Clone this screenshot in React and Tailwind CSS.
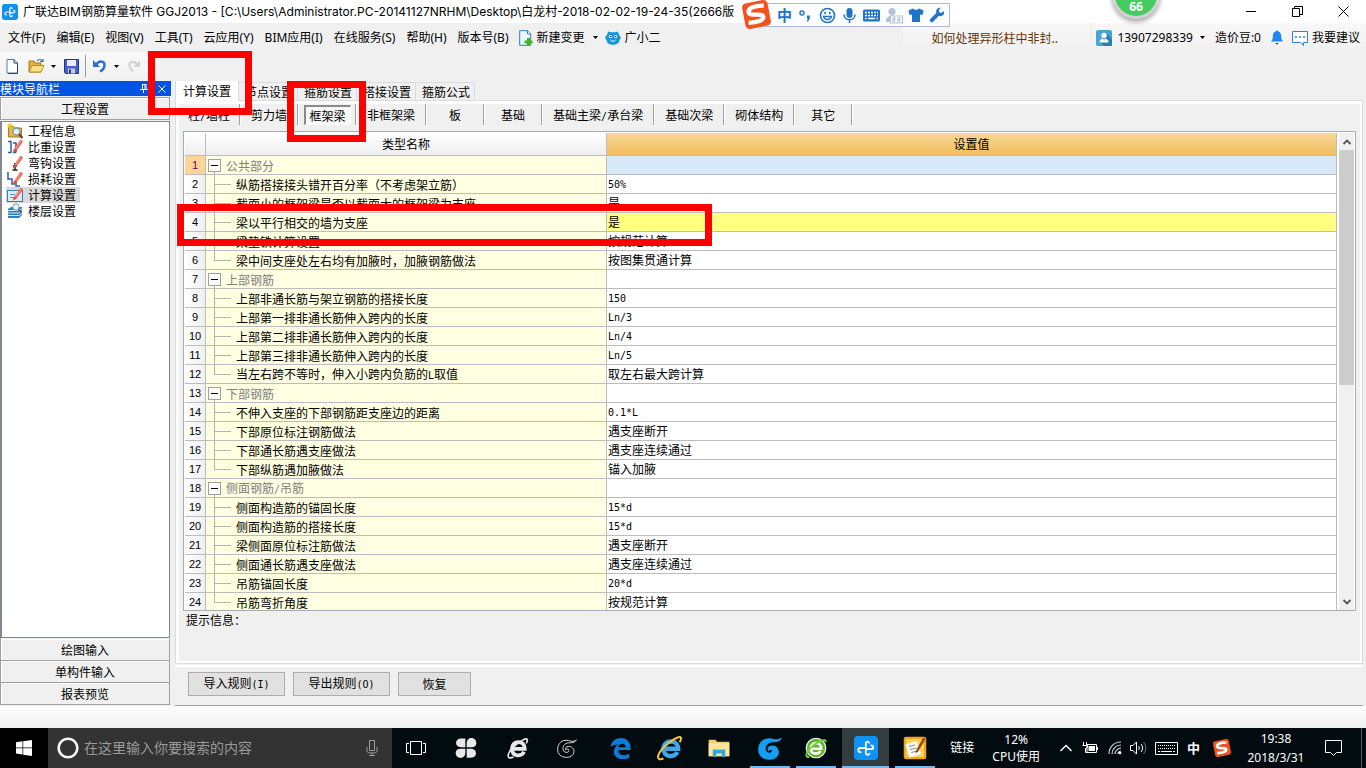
import React from "react";

const UI = "font-['Noto_Sans','Noto_Sans_CJK_SC',sans-serif]";
const SONG = "font-['Noto_Sans_CJK_SC',sans-serif]";

/* CJK text with half-width characters set in a fixed-pitch face */
function Mix({ children }) {
  return (
    <span className="whitespace-pre">
      {children.split(/([\x20-\x7e]+)/).map((part, i) =>
        i % 2 ? (
          <span key={i} className="font-['DejaVu_Sans_Mono',monospace] text-[10px]">{part}</span>
        ) : (
          part
        )
      )}
    </span>
  );
}

function Caret() {
  return (
    <svg width="5" height="3" viewBox="0 0 5 3" className="shrink-0">
      <path d="M0 0h5L2.5 3z" fill="#000" />
    </svg>
  );
}

function AppLogo({ size }) {
  return (
    <svg width={size} height={size} viewBox="0 0 24 24" className="shrink-0">
      <rect width="24" height="24" rx="4" fill="#0c93f5" />
      <path d="M15 6.800C14.500 5 11.800 5.200 11.800 7.500V17c0 2.300 2.900 2.300 3.700.6M11.800 13.200H17c3 0 3-3.700.3-3.700M11.800 12H7c-3.500 0-3.500 4.300-.3 4.200" fill="none" stroke="#fff" strokeWidth="1.800" strokeLinecap="round" />
    </svg>
  );
}

function Sogou({ size }) {
  return (
    <svg width={size} height={size} viewBox="0 0 28 28" className="shrink-0">
      <g transform="rotate(-11 14 14)">
        <rect x="1.500" y="1.500" width="25" height="25" rx="4" fill="#f4511e" />
        <path d="M22.500 7C14 5 7 6.500 7 10.500c0 4.500 13 2.500 13 6.800C20 21 13 21.500 5 20.500" fill="none" stroke="#fff" strokeWidth="4.200" />
      </g>
    </svg>
  );
}

function TitleBar() {
  return (
    <header className="flex h-[23px] shrink-0 items-center bg-white pl-[2px] text-[12px] leading-[18px] text-black">
      <AppLogo size={16} />
      <h1 className="ml-[5px] flex-1 overflow-hidden font-['Inter','Noto_Sans_CJK_SC',sans-serif] whitespace-nowrap">
        广联达BIM钢筋算量软件 GGJ2013 - [C:\Users\Administrator.PC-20141127NRHM\Desktop\白龙村-2018-02-02-19-24-35(2666版
      </h1>
      <div className="flex items-center">
        <button aria-label="最小化" className="flex h-[20px] w-[46px] items-center justify-center">
          <svg width="11" height="11" viewBox="0 0 11 11"><path d="M0 5.500h10" stroke="#000" /></svg>
        </button>
        <button aria-label="还原" className="flex h-[20px] w-[46px] items-center justify-center">
          <svg width="11" height="11" viewBox="0 0 11 11"><path d="M.5 2.500h7v8h-7zM2.500 2.500v-2h8v8h-3" fill="none" stroke="#000" /></svg>
        </button>
        <button aria-label="关闭" className="flex h-[20px] w-[46px] items-center justify-center">
          <svg width="11" height="11" viewBox="0 0 11 11"><path d="M.5.5l10 10M10.500.5l-10 10" stroke="#000" /></svg>
        </button>
      </div>
    </header>
  );
}

function ImeBar() {
  return (
    <div className="absolute top-0 left-[742px] flex items-start text-[#1f74c9]">
      <div className="relative z-10"><Sogou size={29} /></div>
      <div className="-ml-[10px] mt-[3px] flex h-[24px] w-[189px] items-center gap-[5px] border border-[#a9bcd4] bg-[#fcfdff] pl-[15px]">
        <button className={`${SONG} text-[15px] leading-[20px] font-bold`}>中</button>
        <svg width="17" height="17" viewBox="0 0 17 17"><circle cx="5" cy="6" r="2" fill="none" stroke="currentColor" strokeWidth="1.400" /><path d="M10 8.500h2.800v3L11 14.500H9.800l1-3H10z" fill="currentColor" /></svg>
        <svg width="17" height="17" viewBox="0 0 17 17" fill="none" stroke="currentColor" strokeWidth="1.600"><circle cx="8.500" cy="8.500" r="7" /><path d="M4.500 9.500c1 4 7 4 8 0z" strokeWidth="1.300" /><path d="M6.200 4.800v2.400M10.800 4.800v2.400" /></svg>
        <svg width="17" height="17" viewBox="0 0 17 17"><rect x="5.500" y="1" width="6" height="10" rx="3" fill="currentColor" /><path d="M3 7.500c0 7 11 7 11 0M8.500 13v3" fill="none" stroke="currentColor" strokeWidth="1.500" /></svg>
        <svg width="17" height="17" viewBox="0 0 17 17"><rect x="0" y="2.500" width="17" height="12" rx="1.500" fill="currentColor" /><path d="M2 5.500h13M2 8.500h13" stroke="#fff" strokeWidth="1.500" strokeDasharray="2 1" /><path d="M2 11.500h1.500M5 11.500h7M13.500 11.500H15" stroke="#fff" strokeWidth="1.500" /></svg>
        <svg width="18" height="17" viewBox="0 0 18 17"><circle cx="7" cy="4.500" r="3.500" fill="#b4c3d6" /><path d="M1 14c0-7 12-7 12-1v2H1z" fill="#b4c3d6" /><rect x="5.500" y="9" width="12" height="7" fill="#fff" stroke="#b4c3d6" /><path d="M7.500 10.800h2.500v1.700H7.800v1.700h2.500M12.500 10.800H15v1.700h-2.200v1.700h2.500" fill="none" stroke="#a8b9ce" /></svg>
        <svg width="16" height="16" viewBox="0 0 16 16"><path d="M5 1.500c1 1.800 5 1.800 6 0l4.500 2-1 4.500-2.500-.5V15H4V7.500L1.500 8 .5 3.500z" fill="currentColor" /></svg>
        <svg width="16" height="16" viewBox="0 0 16 16"><path d="M14.800 4.200l-2.900 1.900-1.900-1.200L10.300 2l2-1.200C9.500.2 6.500 2 7.300 6L1 12.200C0 14 2 16 3.800 14.900L9.600 9c4 .8 6.400-1.800 5.200-4.800z" fill="currentColor" /></svg>
      </div>
    </div>
  );
}

function ScoreBall() {
  return (
    <div className="absolute -top-[29px] right-[206px] flex size-[48px] items-end justify-center rounded-full border-[3px] border-[#d2d2d2] bg-[#45cc60] pb-[3px] font-['Open_Sans',sans-serif] text-[12px] leading-[12px] font-bold text-white shadow-[0_3px_5px_rgba(0,0,0,0.35)]">
      66
    </div>
  );
}

const MENUS = ["文件(F)", "编辑(E)", "视图(V)", "工具(T)", "云应用(Y)", "BIM应用(I)", "在线服务(S)", "帮助(H)", "版本号(B)"];

function MenuBar() {
  return (
    <nav className="flex h-[29px] shrink-0 items-center bg-[#f0f0f0] pl-[8px] text-[12px] leading-[18px] whitespace-nowrap text-black">
      <div className="flex gap-[11px]">
        {MENUS.map((m) => (
          <button key={m}>{m}</button>
        ))}
      </div>
      <button className="ml-[10px] flex items-center gap-[4px]">
        <svg width="14" height="16" viewBox="0 0 14 16">
          <path d="M.7.7h8l3 3v11.600H.7z" fill="#eaf5ff" stroke="#2f80b9" />
          <path d="M8.500.7v3.300h3.300" fill="#fff" stroke="#2f80b9" />
          <path d="M8 8h3v2.500h2.500v3H11V16H8v-2.500H5.500v-3H8z" fill="#45b31e" />
        </svg>
        新建变更
      </button>
      <span className="ml-[8px]"><Caret /></span>
      <button className="ml-[7px] flex items-center gap-[4px]">
        <svg width="16" height="16" viewBox="0 0 16 16">
          <path d="M3 1.500l3 .8h4l3-.8.800 3 2.200 3-1.800 3.500c-.6 5-11.800 5-12.400 0L0 7.500l2.200-3z" fill="#1597e0" />
          <circle cx="5.500" cy="6.500" r="1.600" fill="#fff" /><circle cx="10.500" cy="6.500" r="1.600" fill="#fff" />
          <circle cx="5.700" cy="6.500" r=".8" fill="#063b66" /><circle cx="10.300" cy="6.500" r=".8" fill="#063b66" />
          <path d="M5.500 10c1 1.600 4 1.600 5 0" fill="none" stroke="#fff" />
        </svg>
        广小二
      </button>
      <div className="ml-auto flex h-full items-center">
        <a href="#tip" className={`${SONG} flex h-full w-[187px] items-center bg-linear-to-b from-[#f8f8f8] to-[#f0f0f0] pl-[28px] text-[#663300]`}>
          如何处理异形柱中非封..
        </a>
        <div className="ml-[2px] flex h-full items-center bg-linear-to-b from-[#f8f8f8] to-[#f0f0f0] pr-[6px] pl-[4px]">
          <svg width="16" height="16" viewBox="0 0 16 16">
            <rect width="16" height="16" rx="2" fill="#4ba3d3" />
            <path d="M10 3l6 6v7H8l-4-4z" fill="#2f7fa8" />
            <circle cx="8" cy="5.500" r="2.700" fill="#fff" /><path d="M3.500 12.500c0-3 2-4 4.500-4s4.500 1 4.500 4z" fill="#fff" /><path d="M7 8.500h2L8 11z" fill="#4ba3d3" />
          </svg>
          <button className="ml-[5px] flex items-center gap-[7px]">13907298339 <Caret /></button>
          <span className="ml-[10px]">造价豆:0</span>
          <svg width="12" height="15" viewBox="0 0 12 15" className="ml-[10px]">
            <path d="M6 0l1 1.300c2.500.7 3.200 3 3.200 5.200 0 2.500.6 3.800 1.800 5H0c1.200-1.200 1.800-2.500 1.800-5C1.800 4.300 2.500 2 5 1.300z" fill="#1e86f0" /><path d="M4.500 13h3L6 14.800z" fill="#0b3b78" />
          </svg>
          <svg width="16" height="16" viewBox="0 0 16 16" className="ml-[9px]">
            <path d="M.5 1.500h15v11h-4v3l-3-3h-8z" fill="#fff" stroke="#2a7fe0" /><path d="M3 7h2M7 7h2M11 7h2" stroke="#2a7fe0" strokeWidth="1.500" />
          </svg>
          <button className="ml-[4px]">我要建议</button>
        </div>
      </div>
    </nav>
  );
}

function ToolBar() {
  return (
    <div className="flex h-[29px] shrink-0 bg-[#f0f0f0]">
      <div className="flex h-[26px] w-[160px] items-center rounded-r bg-linear-to-b from-[#fafafa] to-[#f1f1f1] pt-[2px] pl-[6px]">
        <button aria-label="新建">
          <svg width="13" height="15" viewBox="0 0 13 15" className="block"><path d="M1 .5h7l3.500 3.500v10H1z" fill="#fff" stroke="#5b7a96" /><path d="M8 .5V4h3.500v10.500H2" fill="none" stroke="#26435f" /></svg>
        </button>
        <button aria-label="打开" className="ml-[9px]">
          <svg width="17" height="16" viewBox="0 0 17 16" className="block"><path d="M1 3h5l1 2h6v9H1z" fill="#e6b23c" stroke="#a67c1c" /><path d="M1 14L4 7.500h12L13 14z" fill="#ffdf84" stroke="#b78b26" /><path d="M9 3c2-2 4-2 5.500 0M12 3.500h3V1" fill="none" stroke="#3d6c9a" strokeWidth="1.200" /></svg>
        </button>
        <span className="ml-[6px]"><Caret /></span>
        <button aria-label="保存" className="ml-[8px]">
          <svg width="15" height="15" viewBox="0 0 15 15" className="block"><path d="M.5.5h14v14h-13l-1-1z" fill="#4b5fd0" stroke="#26328c" /><rect x="3" y="1" width="9" height="6" fill="#e8eefc" /><rect x="4" y="9.500" width="7" height="5" fill="#c6cbe0" /><rect x="5" y="10.500" width="2" height="4" fill="#26328c" /></svg>
        </button>
        <span className="mx-[6px] h-[22px] w-px bg-[#9a9a9a]" />
        <button aria-label="撤销" className="ml-[1px]">
          <svg width="14" height="14" viewBox="0 0 14 14" className="block"><path d="M3.500 5.500C6 1 12 2 11.500 6.500c-.3 3-2.500 5-4.500 6" fill="none" stroke="#2d6fd0" strokeWidth="2.400" /><path d="M0 1v7h7z" fill="#2d6fd0" /></svg>
        </button>
        <span className="ml-[7px]"><Caret /></span>
        <button aria-label="重做" className="ml-[8px]">
          <svg width="13" height="14" viewBox="0 0 14 14" className="block"><path d="M10.500 5.500C8 1 2 2 2.500 6.500c.3 3 2.500 5 4.500 6" fill="none" stroke="#d2d2d2" strokeWidth="2.200" /><path d="M14 1v7H7z" fill="#d2d2d2" /></svg>
        </button>
      </div>
    </div>
  );
}

const PEN = (
  <g>
    <path d="M6.500 11L13.500.800l2.500 1.700-7 9.500-3 1.500z" fill="#e8442c" />
    <path d="M8 9.500L14 1.200l1 .7-6 8.600z" fill="#ff9a80" />
  </g>
);

const NAV = [
  ["工程信息", <g key="a"><path d="M1.500 3.500h5l1 1.500h7v9h-13z" fill="#e7b548" stroke="#a5792a" /><path d="M3 0v6M0 3h6M1 1l4 4M5 1L1 5" stroke="#f2c500" /><circle cx="9.500" cy="8.500" r="3.500" fill="#e3f1fb" stroke="#7a97ad" strokeWidth="1.300" /><path d="M12 11l3.500 4" stroke="#5a4632" strokeWidth="2" /></g>],
  ["比重设置", <g key="b"><path d="M1 2.500h3v11H1M6 4h3v9.500M6 13.500h3" fill="none" stroke="#2d5da8" strokeWidth="1.500" />{PEN}</g>],
  ["弯钩设置", <g key="c"><path d="M8 8v7M5.500 15h5M6 11h4" fill="none" stroke="#222" strokeWidth="1.500" />{PEN}</g>],
  ["损耗设置", <g key="d"><path d="M1 1v7h4v5h3M9 10v5h4" fill="none" stroke="#2d5da8" strokeWidth="1.500" />{PEN}</g>],
  ["计算设置", <g key="e"><rect x=".5" y="3.500" width="15" height="11" fill="#dcebfb" stroke="#3c78c0" /><path d="M3 7.500h5M3 10.500h7" stroke="#5a96d8" />{PEN}</g>],
  ["楼层设置", <g key="f"><path d="M1 6l3-2h11v8l-3 3H1z" fill="#2c7fc0" /><path d="M1 7.500h11l3-2M1 10h11l3-2M1 12.500h11l3-2" fill="none" stroke="#d6ecfa" /><circle cx="9" cy="4" r="3.200" fill="#e6f3fb" stroke="#8299ab" /><path d="M11.500 6.500l3 3" stroke="#5a5a5a" strokeWidth="1.600" /></g>],
];

const NAV_BUTTON = "h-[22px] w-full shrink-0 border-r border-b border-[#a0a0a0] bg-[#f0f0f0] text-center text-[12px] leading-[20px] text-black shadow-[inset_1px_1px_0_#fff]";

function Sidebar() {
  return (
    <aside className={`${SONG} flex w-[171px] shrink-0 flex-col bg-[#f0f0f0] pb-px text-[12px]`}>
      <div className="flex h-[15px] shrink-0 items-center bg-[#0054e3] leading-[14px] text-white">
        <h2>模块导航栏</h2>
        <button aria-label="固定" className="ml-auto">
          <svg width="8" height="9" viewBox="0 0 8 9" className="block"><path d="M2 .5h4M2.500 0v5M5 0v5M6 0v5M0 5.500h8M3.500 5.500V9" fill="none" stroke="#fff" /></svg>
        </button>
        <button aria-label="关闭导航栏" className="mr-[5px] ml-[10px]">
          <svg width="8" height="8" viewBox="0 0 8 8" className="block"><path d="M.5.5l7 7M7.500.5l-7 7" stroke="#fff" /></svg>
        </button>
      </div>
      <div className="flex min-h-0 flex-1 flex-col pt-px pr-px">
        <button className="h-[23px] shrink-0 border border-[#a0a0a0] bg-[#f0f0f0] text-center leading-[22px] text-black shadow-[inset_1px_1px_0_#fff]">工程设置</button>
        <ul className="mt-[1px] flex-1 border border-l-2 border-[#828790] bg-white pt-[1px] pl-[4px]">
          {NAV.map(([label, icon]) => (
            <li key={label} className="h-[16px]">
              <button className={`flex h-[16px] items-center gap-[5px] pr-[4px] pl-px leading-[16px] text-black ${label === "计算设置" ? "bg-[#d9d9d9]" : ""}`}>
                <svg width="16" height="16" viewBox="0 0 16 16">{icon}</svg>
                {label}
              </button>
            </li>
          ))}
        </ul>
        <div className="flex flex-col border-l border-[#a0a0a0] pt-px">
          <button className={NAV_BUTTON}>绘图输入</button>
          <button className={NAV_BUTTON}>单构件输入</button>
          <button className={NAV_BUTTON}>报表预览</button>
        </div>
      </div>
    </aside>
  );
}

const ROWS = [
  ["公共部分", null, "group"],
  ["纵筋搭接接头错开百分率（不考虑架立筋）", "50%"],
  ["截面小的框架梁是否以截面大的框架梁为支座", "是"],
  ["梁以平行相交的墙为支座", "是"],
  ["梁垫铁计算设置", "按规范计算"],
  ["梁中间支座处左右均有加腋时，加腋钢筋做法", "按图集贯通计算", "last"],
  ["上部钢筋", null, "group"],
  ["上部非通长筋与架立钢筋的搭接长度", "150"],
  ["上部第一排非通长筋伸入跨内的长度", "Ln/3"],
  ["上部第二排非通长筋伸入跨内的长度", "Ln/4"],
  ["上部第三排非通长筋伸入跨内的长度", "Ln/5"],
  ["当左右跨不等时，伸入小跨内负筋的L取值", "取左右最大跨计算", "last"],
  ["下部钢筋", null, "group"],
  ["不伸入支座的下部钢筋距支座边的距离", "0.1*L"],
  ["下部原位标注钢筋做法", "遇支座断开"],
  ["下部通长筋遇支座做法", "遇支座连续通过"],
  ["下部纵筋遇加腋做法", "锚入加腋", "last"],
  ["侧面钢筋/吊筋", null, "group"],
  ["侧面构造筋的锚固长度", "15*d"],
  ["侧面构造筋的搭接长度", "15*d"],
  ["梁侧面原位标注筋做法", "遇支座断开"],
  ["侧面通长筋遇支座做法", "遇支座连续通过"],
  ["吊筋锚固长度", "20*d"],
  ["吊筋弯折角度", "按规范计算", "last"],
];

function NameCell({ label, kind }) {
  if (kind === "group") {
    return (
      <div className="flex h-[18px] items-center leading-[14px] text-[#808080]">
        <div className="ml-[2px] flex h-full w-[13px] flex-col items-center pt-[3px]">
          <button aria-label={`折叠 ${label}`} className="flex h-[13px] w-[13px] shrink-0 items-center justify-center border border-[#a0a0a0] bg-white">
            <span className="h-px w-[7px] bg-black" />
          </button>
          <span className="w-px flex-1 bg-[#b4b4b4]" />
        </div>
        <span className="ml-[5px] pt-[2px]"><Mix>{label}</Mix></span>
      </div>
    );
  }
  return (
    <div className="flex h-[18px] items-center leading-[14px]">
      <div className="ml-[8px] flex h-[19px] w-[17px] flex-col self-start">
        <span className="h-[10px] border-b border-l border-[#b4b4b4]" />
        <span className={kind === "last" ? "h-[9px]" : "h-[9px] border-l border-[#b4b4b4]"} />
      </div>
      <span className="ml-[5px] pt-[2px]"><Mix>{label}</Mix></span>
    </div>
  );
}

function SettingsTable() {
  return (
    <div className="mx-[4px] mt-[5px] flex min-h-0 flex-1 overflow-hidden border border-[#a5acb2] bg-white pt-px pl-px">
      <div className="min-w-0 flex-1 overflow-hidden">
        <table className={`${SONG} w-full table-fixed border-separate border-spacing-0 text-[12px] leading-[16px] text-black`}>
          <colgroup>
            <col className="w-[21px]" />
            <col className="w-[401px]" />
            <col />
          </colgroup>
          <thead>
            <tr className="h-[23px]">
              <th aria-label="序号" className="border-r border-b border-[#bdbdbd] bg-linear-to-b from-white to-[#eeeeee] p-0" />
              <th className="border-r border-b border-[#bdbdbd] bg-linear-to-b from-white to-[#eeeeee] p-0 font-normal">类型名称</th>
              <th className="border-r border-b border-[#bdbdbd] bg-linear-to-b from-[#f8d797] to-[#f0be5c] p-0 font-normal">设置值</th>
            </tr>
          </thead>
          <tbody>
            {ROWS.map(([label, value, kind], i) => (
              <tr key={i} className="h-[19px]">
                <th scope="row" className={`border-r border-b border-[#bdbdbd] p-0 text-center font-['Liberation_Sans',sans-serif] text-[11px] font-normal ${i === 0 ? "bg-[#ffd595] text-[#5a0a5a]" : "bg-linear-to-r from-white to-[#f0f0f0]"}`}>
                  {i + 1}
                </th>
                <td className="border-r border-b border-[#bdbdbd] bg-[#ffffe1] p-0"><NameCell label={label} kind={kind} /></td>
                <td className={`border-r border-b border-[#bdbdbd] p-0 pl-px leading-[14px] ${i === 0 ? "bg-[#d8eaf9]" : i === 3 ? "bg-[#ffff80]" : "bg-white"}`}>
                  <div className="flex h-[18px] items-center">{value && <Mix>{value}</Mix>}</div>
                </td>
              </tr>
            ))}
          </tbody>
        </table>
      </div>
      <div className="mr-px ml-[2px] flex w-[15px] shrink-0 flex-col bg-[#f0f0f0]">
        <button aria-label="向上滚动" className="flex h-[17px] shrink-0 items-center justify-center">
          <svg width="8" height="6" viewBox="0 0 8 6"><path d="M.5 5L4 1.500 7.500 5" fill="none" stroke="#505050" strokeWidth="1.800" /></svg>
        </button>
        <div className="min-h-0 flex-1"><div className="h-[53%] bg-[#cdcdcd]" /></div>
        <button aria-label="向下滚动" className="flex h-[17px] shrink-0 items-center justify-center">
          <svg width="8" height="6" viewBox="0 0 8 6"><path d="M.5 1L4 4.500 7.500 1" fill="none" stroke="#505050" strokeWidth="1.800" /></svg>
        </button>
      </div>
    </div>
  );
}

const TABS = ["节点设置", "箍筋设置", "搭接设置", "箍筋公式"];
const KINDS = ["柱/墙柱", "剪力墙", "框架梁", "非框架梁", "板", "基础", "基础主梁/承台梁", "基础次梁", "砌体结构", "其它"];
const ACTION = "h-[24px] border border-[#adadad] bg-[#e1e1e1] text-[12px] leading-[20px] text-black";

function MainPanel() {
  return (
    <main className={`${SONG} mr-[3px] ml-[4px] flex min-w-0 flex-1 flex-col text-[12px] text-black`}>
      <div className="flex h-[19px] shrink-0 items-end">
        <button className="relative z-10 -mb-px h-[20px] w-[64px] border-x border-[#dcdcdc] bg-white pb-[2px] leading-[17px]">计算设置</button>
        {TABS.map((t) => (
          <button key={t} className="h-[18px] w-[59px] border-t border-r border-[#dcdcdc] pl-[2px] leading-[17px]">{t}</button>
        ))}
      </div>
      <section className="flex min-h-0 flex-1 flex-col border border-[#dcdcdc] bg-white p-[3px] pr-[2px] pb-[2px]">
        <div className="flex min-h-0 flex-1 flex-col bg-[#f0f0f0]">
          <div className="flex h-[22px] shrink-0 items-start">
            {KINDS.map((k) => (
              <div key={k} className="flex h-[21px] min-w-[58px] items-center justify-center border-r border-[#a0a0a0] pr-[4px] pl-[5px] shadow-[1px_0_0_#fff] first:px-[3px]">
                <button className={k === "框架梁" ? "h-[20px] border border-t-2 border-l-2 border-[#fff] border-t-[#8a8a8a] border-l-[#8a8a8a] bg-[#f8f8f8] px-[4px] leading-[17px]" : "h-[20px] px-[6px] leading-[20px]"}>
                  <Mix>{k}</Mix>
                </button>
              </div>
            ))}
          </div>
          <SettingsTable />
          <p className="h-[50px] shrink-0 pl-[7px] leading-[18px]">提示信息：</p>
        </div>
      </section>
      <div className="mt-px flex h-[41px] shrink-0 gap-[8px] border-t-2 border-b border-t-white border-b-[#a0a0a0] pt-[5px] pl-[13px]">
        <button className={`${ACTION} w-[97px]`}><Mix>导入规则(I)</Mix></button>
        <button className={`${ACTION} w-[97px]`}><Mix>导出规则(O)</Mix></button>
        <button className={`${ACTION} w-[73px]`}>恢复</button>
      </div>
    </main>
  );
}

const SWIRL = "M31 3C26 7 22 5 18 4 8 2 1 9 1 18c0 8 6 13 14 13s13-5 12-11c-1-5-6-8-11-6-2 1-3 3-2 5 1-2 5-2 5 1s-4 4-7 2c-4-3-3-10 2-13C20 6 27 10 31 3z";

const APPS = [
  { name: "风扇", w: "w-[52px]", size: 22, art: <g fill="#e8e8e8"><path d="M15 2v13H9C-1 15-1 2 9 2z" /><path d="M17 15V9c0-10 14-10 14 0 0 4-3 6-7 6z" /><path d="M17 17h6c10 0 10 13 0 13h-6z" /><path d="M15 17v6c0 10-14 10-14 0 0-4 3-6 7-6z" /></g> },
  { name: "浏览器", w: "w-[52px]", size: 24, art: <g fill="none" stroke="#e8e8e8"><path d="M7 17h18c0-12-17-12-17 0 0 11 13 11 16 4" strokeWidth="5" /><path d="M10 28c-11 5-9-7 4-17S31 2 27 10" strokeWidth="2.200" /></g> },
  { name: "广联达", w: "w-[46px]", size: 20, art: <path d={SWIRL} fill="none" stroke="#d5d5d5" strokeWidth="1.600" /> },
  { name: "Edge", w: "w-[62px]", size: 22, art: <path d="M1 14C3-2 29-4 30 16v3H12c0 9 11 9 16 5v6C17 36 4 31 6 19c1-4 3-7 7-8-6 0-9 1-12 3zm11 1h11c0-7-10-7-11 0z" fill="#0b7bdc" /> },
  { name: "Internet Explorer", w: "w-[36px]", size: 26, art: <g fill="none"><path d="M8 17h18c0-12-18-12-18 0 0 11 14 11 17 4" stroke="#3fa6ea" strokeWidth="5.500" /><path d="M8 29c-11 4-8-8 5-18S33-1 28 9" stroke="#f3c730" strokeWidth="2.500" /></g> },
  { name: "文件资源管理器", w: "w-[62px]", size: 22, art: <g><path d="M1 4h10l2 3h18v21H1z" fill="#f4cf68" /><path d="M1 9h30v19H1z" fill="#ffe69a" /><path d="M7 18h18v11h-5v-5h-8v5H7z" fill="#33a7dc" /></g> },
];

const RUNNING = [
  { name: "广联达云", size: 24, cls: "w-[40px] border-[#76b9ed]", art: <path d={SWIRL} fill="#149ff2" stroke="#149ff2" strokeWidth="1.500" /> },
  { name: "360浏览器", size: 24, cls: "w-[40px] border-[#76b9ed]", art: <g fill="none"><circle cx="16" cy="16" r="13" fill="#5cb52c" stroke="#fff" strokeWidth="1.500" /><path d="M9 17h14c0-10-14-10-14 0 0 8 10 8 13 3" stroke="#fff" strokeWidth="3.500" /><path d="M7 28c-8 1-2-10 6-16S32 3 28 8" stroke="#79d33c" strokeWidth="2.500" /></g> },
  { name: "广联达BIM钢筋算量软件", size: 24, cls: "w-[47px] border-[#76b9ed] bg-[#333d40]", art: null },
  { name: "便签", size: 24, cls: "w-[40px] border-[#76b9ed]", art: <g><rect x="1" y="1" width="30" height="30" rx="3" fill="#f5a21c" /><path d="M4 4h24v24H4z" fill="#fbd25a" /><path d="M3 11l15-4 6 17-15 5z" fill="#fff" /><path d="M8 14l8-2M9 18l9-2M11 22l8-2" stroke="#888" strokeWidth="1.500" /><path d="M17 20l10-18 3 2-10 17-3 2z" fill="#a14510" /></g> },
];

function TaskBar() {
  return (
    <footer className="flex h-[40px] shrink-0 items-center bg-[#020c10] text-[12px] text-white">
      <button aria-label="开始" className="flex h-full w-[48px] shrink-0 items-center justify-center bg-black">
        <svg width="16" height="16" viewBox="0 0 16 16"><path d="M0 2.300l6.500-1v6.200H0zM7.200 1.200L16 0v7.500H7.200zM0 8.300h6.500v6.300l-6.500-1zM7.200 8.300H16V16l-8.800-1.300z" fill="#fff" /></svg>
      </button>
      <label className="flex h-full w-[344px] shrink-0 items-center bg-[#333333] pr-[14px] pl-[9px]">
        <svg width="22" height="22" viewBox="0 0 22 22" className="shrink-0"><circle cx="11" cy="11" r="9.300" fill="none" stroke="#f4f4f4" strokeWidth="2.600" /></svg>
        <input aria-label="搜索" placeholder="在这里输入你要搜索的内容" className="ml-[5px] min-w-0 flex-1 bg-transparent text-[14px] leading-[20px] outline-none placeholder:text-[#9a9a9a]" />
        <svg width="12" height="16" viewBox="0 0 12 16" className="shrink-0"><path d="M3.500.5h5v10h-5zM1 7v4.500c0 2 10 2 10 0V7M6 13v2.500M3 15.500h6" fill="none" stroke="#9a9a9a" /></svg>
      </label>
      <button aria-label="任务视图" className="flex h-full w-[48px] shrink-0 items-center justify-center">
        <svg width="20" height="14" viewBox="0 0 20 14"><path d="M4.500.5h11v13h-11zM3 2.500H.5v9H3M17 2.500h2.500v9H17" fill="none" stroke="#fff" /></svg>
      </button>
      {APPS.map((a) => (
        <button key={a.name} aria-label={a.name} className={`flex h-full shrink-0 items-center justify-center ${a.w}`}>
          <svg width={a.size} height={a.size} viewBox="0 0 32 32">{a.art}</svg>
        </button>
      ))}
      <div className="flex h-full shrink-0 gap-[6px]">
        {RUNNING.map((a) => (
          <button key={a.name} aria-label={a.name} className={`flex h-full items-center justify-center border-b-2 pt-[2px] ${a.cls}`}>
            {a.art ? <svg width={a.size} height={a.size} viewBox="0 0 32 32">{a.art}</svg> : <AppLogo size={24} />}
          </button>
        ))}
      </div>
      <div className="ml-auto flex h-full shrink-0 items-center">
        <span>链接</span>
        <div className="ml-[18px] text-center leading-[17px]">12%<br />CPU使用</div>
        <svg width="12" height="8" viewBox="0 0 12 8" className="ml-[20px]"><path d="M.5 7L6 1.500 11.500 7" fill="none" stroke="#fff" strokeWidth="1.400" /></svg>
        <svg width="16" height="12" viewBox="0 0 16 12" className="ml-[10px]"><path d="M5 2.500h9.500v8H5z" fill="none" stroke="#fff" /><path d="M6.500 4h6.500v5H6.500z" fill="#fff" /><path d="M15.500 5v3M1.500 0v3M4.500 0v3M.5 3.500h5v2l-2 1v4h2" fill="none" stroke="#fff" /></svg>
        <svg width="14" height="14" viewBox="0 0 14 14" className="ml-[10px]"><path d="M1 13C1 6 6 1 13 1M4 13c0-5 4-9 9-9M7 13c0-3 3-6 6-6M10 13c0-2 1-3 3-3" fill="none" stroke="#cfcfcf" strokeWidth="1.200" /><circle cx="12" cy="12" r="1.300" fill="#fff" /></svg>
        <svg width="17" height="14" viewBox="0 0 17 14" className="ml-[8px]"><path d="M.5 4.500H3L6.500 1v12L3 9.500H.5z" fill="none" stroke="#fff" /><path d="M8.500 5c1 1.200 1 2.800 0 4M11 3c2 2.500 2 5.500 0 8" fill="none" stroke="#fff" /><path d="M13.500 1c3 3.500 3 8.500 0 12" fill="none" stroke="#777" /></svg>
        <svg width="23" height="13" viewBox="0 0 23 13" className="ml-[8px]"><path d="M.5.5h22v12H.5z" fill="none" stroke="#fff" /><path d="M3 3.500h17M3 6.500h17" stroke="#fff" strokeDasharray="1 1" /><path d="M3 9.500h2M6 9.500h11M18 9.500h2" stroke="#fff" /></svg>
        <button className={`${SONG} ml-[9px] text-[13px] leading-[18px] font-bold`}>中</button>
        <span className="ml-[13px]"><Sogou size={18} /></span>
        <div className="ml-[14px] w-[62px] text-center leading-[19px] whitespace-nowrap">19:38<br />2018/3/31</div>
        <button aria-label="通知" className="ml-[18px] flex h-full items-center">
          <svg width="17" height="16" viewBox="0 0 17 16"><path d="M.5.5h16v12h-5L8.500 15.500l-3-3h-5z" fill="none" stroke="#fff" /></svg>
        </button>
        <span className="mr-[4px] ml-[19px] h-full w-px bg-[#5a5a5a]" />
      </div>
    </footer>
  );
}

export default function App() {
  return (
    <div className={`${UI} relative flex h-screen flex-col overflow-hidden bg-[#f0f0f0]`}>
      <TitleBar />
      <MenuBar />
      <ToolBar />
      <div className="flex min-h-0 flex-1">
        <Sidebar />
        <MainPanel />
      </div>
      <div className="h-[22px] shrink-0 bg-linear-to-b from-[#fdfdfd] to-[#f1f1f1]" />
      <TaskBar />
      <ImeBar />
      <ScoreBall />
      <div className="pointer-events-none absolute top-[51px] left-[148px] h-[64px] w-[104px] border-[7px] border-[#ff0000]" />
      <div className="pointer-events-none absolute top-[81px] left-[287px] h-[61px] w-[79px] border-[7px] border-[#ff0000]" />
      <div className="pointer-events-none absolute top-[204px] left-[177px] h-[42px] w-[535px] border-[7px] border-[#ff0000]" />
    </div>
  );
}
